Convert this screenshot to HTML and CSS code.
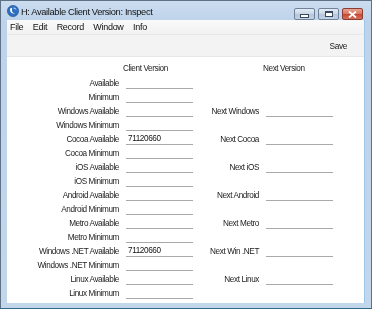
FILE: index.html
```html
<!DOCTYPE html>
<html>
<head>
<meta charset="utf-8">
<link rel="stylesheet" href="styles.css">
</head>
<body>
<div class="window">
  <div class="titlebar">
    <svg class="appicon" width="12" height="12" viewBox="0 0 12 12">
      <circle cx="6" cy="6" r="5.6" fill="#2f6fc0"/>
      <circle cx="6" cy="6" r="5.6" fill="none" stroke="#1d4f94" stroke-width="0.6"/>
      <path d="M3.2 3.6 C2.4 6.6 4.6 9.4 8.4 8.6 C6 8.4 4.4 6.6 5 4.2 C5.4 3 4 2.6 3.2 3.6 Z" fill="#ffffff"/>
      <path d="M6.4 2.6 C8 2.6 9.4 3.8 9.4 5.6 C8.8 4.4 7.8 3.6 6.4 3.6 Z" fill="#cfe2f8"/>
    </svg>
    <span class="title">H: Available Client Version: Inspect</span>
    <div class="capbtns">
      <span class="capbtn"><i class="g-min"></i></span>
      <span class="capbtn"><i class="g-max"></i></span>
      <span class="capbtn close">
        <svg width="9" height="7" viewBox="0 0 9 7"><path d="M1 0.5 L8 6.5 M8 0.5 L1 6.5" stroke="#ffffff" stroke-width="1.8"/></svg>
      </span>
    </div>
  </div>
  <div class="client">
    <div class="menubar">
      <span>File</span><span>Edit</span><span>Record</span><span>Window</span><span>Info</span>
    </div>
    <div class="toolbar"><span class="save">Save</span></div>
    <div class="form">
      <span></span><span class="head">Client Version</span><span></span><span class="head">Next Version</span>

      <span class="lbl">Available</span><span class="fld"></span><span></span><span></span>
      <span class="lbl">Minimum</span><span class="fld"></span><span></span><span></span>
      <span class="lbl">Windows Available</span><span class="fld"></span><span class="lbl">Next Windows</span><span class="fld"></span>
      <span class="lbl">Windows Minimum</span><span class="fld"></span><span></span><span></span>
      <span class="lbl">Cocoa Available</span><span class="fld">71120660</span><span class="lbl">Next Cocoa</span><span class="fld"></span>
      <span class="lbl">Cocoa Minimum</span><span class="fld"></span><span></span><span></span>
      <span class="lbl">iOS Available</span><span class="fld"></span><span class="lbl">Next iOS</span><span class="fld"></span>
      <span class="lbl">iOS Minimum</span><span class="fld"></span><span></span><span></span>
      <span class="lbl">Android Available</span><span class="fld"></span><span class="lbl">Next Android</span><span class="fld"></span>
      <span class="lbl">Android Minimum</span><span class="fld"></span><span></span><span></span>
      <span class="lbl">Metro Available</span><span class="fld"></span><span class="lbl">Next Metro</span><span class="fld"></span>
      <span class="lbl">Metro Minimum</span><span class="fld"></span><span></span><span></span>
      <span class="lbl">Windows .NET Available</span><span class="fld">71120660</span><span class="lbl">Next Win .NET</span><span class="fld"></span>
      <span class="lbl">Windows .NET Minimum</span><span class="fld"></span><span></span><span></span>
      <span class="lbl">Linux Available</span><span class="fld"></span><span class="lbl">Next Linux</span><span class="fld"></span>
      <span class="lbl">Linux Minimum</span><span class="fld"></span><span></span><span></span>
    </div>
  </div>
</div>
</body>
</html>
```
FILE: styles.css
```css
html, body {
  margin: 0;
  padding: 0;
  background: #ffffff;
}

.window {
  box-sizing: border-box;
  width: 372px;
  height: 309px;
  border: 1px solid #5f7184;
  border-bottom-color: #2f6a86;
  background: linear-gradient(to bottom, #cbdcef 0px, #bed3ea 20px, #c2d6ec 100%);
  padding: 0 6px 5px 6px;
  display: flex;
  flex-direction: column;
  font-family: "Liberation Sans", Arial, sans-serif;
  color: #1e1e1e;
}

.titlebar {
  height: 19px;
  display: flex;
  align-items: center;
}

.appicon {
  margin-top: 1px;
}

.title {
  margin-left: 2px;
  font-size: 9.3px;
  letter-spacing: -0.35px;
  color: #111;
  margin-top: 2px;
  filter: grayscale(1);
}

.capbtns {
  margin-left: auto;
  display: flex;
  gap: 3px;
  align-self: flex-start;
  margin-top: 7px;
  margin-right: 2px;
}

.capbtn {
  box-sizing: border-box;
  width: 21px;
  height: 12px;
  border: 1px solid #6f8299;
  border-radius: 2px;
  background: linear-gradient(to bottom, #e3ebf5 0%, #c9d6e6 50%, #b5c6db 51%, #c3d2e4 100%);
  display: flex;
  align-items: center;
  justify-content: center;
}

.capbtn.close {
  border-color: #8a3b32;
  background: linear-gradient(to bottom, #e8a493 0%, #d9735f 50%, #c7472f 51%, #d4705a 100%);
}

.g-min {
  display: block;
  width: 7px;
  height: 2px;
  background: #ffffff;
  border: 1px solid #3a4a5e;
  margin-top: 3px;
}

.g-max {
  display: block;
  box-sizing: border-box;
  width: 8px;
  height: 6px;
  border: 1px solid #3a4a5e;
  border-top-width: 2px;
  background: #ffffff;
}

.client {
  flex: 1;
  display: flex;
  flex-direction: column;
  background: #ffffff;
  border-right: 1px solid #9ec6e9;
}

.menubar {
  height: 14px;
  display: flex;
  align-items: center;
  background: linear-gradient(to bottom, #f7f9fc, #edf2f9);
  font-size: 9px;
  letter-spacing: -0.3px;
  padding-left: 3px;
  gap: 9.5px;
  color: #111;
  filter: grayscale(1);
}

.toolbar {
  height: 23px;
  background: #f3f3f3;
  border-top: 1px solid #e4e8ee;
  border-bottom: 1px solid #e7e7e7;
  box-sizing: border-box;
  display: flex;
  align-items: center;
  justify-content: flex-end;
  padding-right: 17px;
  filter: grayscale(1);
}

.save {
  font-size: 8.3px;
  letter-spacing: -0.35px;
  color: #1a1a1a;
}

.form {
  display: grid;
  grid-template-columns: 112px 67px 59px 67px;
  column-gap: 7px;
  grid-template-rows: 15px;
  grid-auto-rows: 14px;
  padding-top: 5px;
  font-size: 8.2px;
  letter-spacing: -0.4px;
  color: #1c1c1c;
  filter: grayscale(1);
}

.form > span {
  line-height: 14px;
  white-space: nowrap;
}

.head {
  margin-left: -3px;
}

.lbl {
  text-align: right;
}

.form > .fld {
  box-sizing: border-box;
  height: 12px;
  line-height: 12px;
  border-bottom: 1px solid #a9a9a9;
  padding-left: 2px;
  color: #111;
}
```
